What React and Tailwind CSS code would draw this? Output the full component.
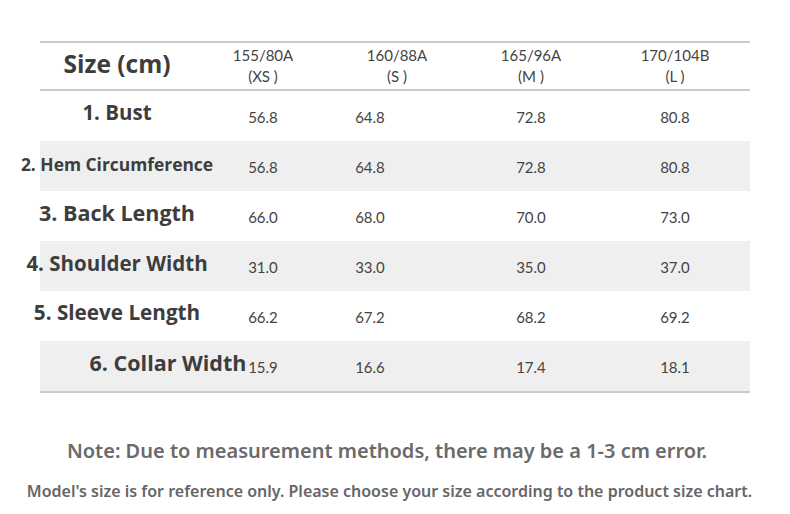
import React from "react";

const cols = [
  { w: "w-[138px]", head: ["155/80A", "(XS )"] },
  { w: "w-[130px]", head: ["160/88A", "(S )"] },
  { w: "w-[138px]", head: ["165/96A", "(M )"] },
  { w: "w-[150px]", head: ["170/104B", "(L )"] },
];

const rows = [
  { label: "1. Bust", cls: "text-[20.5px] -translate-y-[4px]", pad: "", vals: ["56.8", "64.8", "72.8", "80.8"] },
  { label: "2. Hem Circumference", cls: "text-[17.4px] -translate-y-[2px]", pad: "", vals: ["56.8", "64.8", "72.8", "80.8"] },
  { label: "3. Back Length", cls: "text-[21.5px] -translate-y-[3px]", pad: "", vals: ["66.0", "68.0", "70.0", "73.0"] },
  { label: "4. Shoulder Width", cls: "text-[20.5px] -translate-y-[3px]", pad: "", vals: ["31.0", "33.0", "35.0", "37.0"] },
  { label: "5. Sleeve Length", cls: "text-[20.7px] -translate-y-[3px]", pad: "", vals: ["66.2", "67.2", "68.2", "69.2"] },
  { label: "6. Collar Width", cls: "text-[21.5px] -translate-y-[3px]", pad: "pl-[102px]", vals: ["15.9", "16.6", "17.4", "18.1"] },
];

export default function App() {
  return (
    <div className="w-[790px] h-[514px] bg-white overflow-hidden" style={{ fontFamily: "'Open Sans', 'Noto Sans', sans-serif" }}>
      <div className="ml-[40px] mt-[41px] w-[710px] border-t-2 border-b-2 border-[#cbcbcb]">
        <div className="flex h-[48px] border-b-2 border-[#cbcbcb] items-center">
          <div className="w-[154px] flex justify-center whitespace-nowrap text-[24.5px] font-bold text-[#3d3d3d] -translate-y-[2px]">
            Size (cm)
          </div>
          {cols.map((c, i) => (
            <div key={i} className={`${c.w} flex flex-col items-center text-[15px] leading-[21px] text-[#444]`} style={{ fontFamily: "Lato, 'Open Sans', sans-serif" }}>
              <span>{c.head[0]}</span>
              <span>{c.head[1]}</span>
            </div>
          ))}
        </div>
        {rows.map((r, ri) => (
          <div key={ri} className={`flex h-[50px] items-center ${ri % 2 === 1 ? "bg-[#efefef]" : "bg-white"}`}>
            <div className={`w-[154px] flex justify-center whitespace-nowrap font-bold text-[#3d3d3d] ${r.pad}`}>
              <span className={r.cls}>{r.label}</span>
            </div>
            {cols.map((c, i) => (
              <div
                key={i}
                className={`${c.w} flex justify-center text-[15px] text-[#444] translate-y-[1px] ${i === 1 ? "pr-[54px]" : ""}`}
                style={{ fontFamily: "Lato, 'Open Sans', sans-serif" }}
              >
                {r.vals[i]}
              </div>
            ))}
          </div>
        ))}
      </div>
      <div className="mt-[43px] pr-[16px] flex justify-center text-[20px] font-semibold text-[#6a6a6a] whitespace-nowrap" style={{ fontFamily: "'Noto Sans', sans-serif" }}>
        Note: Due to measurement methods, there may be a 1-3 cm error.
      </div>
      <div className="mt-[13px] pr-[11px] flex justify-center text-[16px] font-semibold text-[#666] whitespace-nowrap" style={{ fontFamily: "'Noto Sans', sans-serif" }}>
        Model's size is for reference only. Please choose your size according to the product size chart.
      </div>
    </div>
  );
}
